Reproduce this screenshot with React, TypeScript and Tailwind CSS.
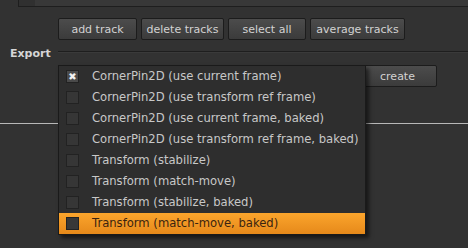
const items = [
  "CornerPin2D (use current frame)",
  "CornerPin2D (use transform ref frame)",
  "CornerPin2D (use current frame, baked)",
  "CornerPin2D (use transform ref frame, baked)",
  "Transform (stabilize)",
  "Transform (match-move)",
  "Transform (stabilize, baked)",
  "Transform (match-move, baked)",
];

const buttons = [
  { label: "add track", w: "w-[79px]" },
  { label: "delete tracks", w: "w-[83px]" },
  { label: "select all", w: "w-[78px]" },
  { label: "average tracks", w: "w-[95px]" },
];

function NukeButton({ label, className = "" }: { label: string; className?: string }) {
  return (
    <button
      className={`h-[22px] rounded-[2px] border border-[#1c1c1c] bg-gradient-to-b from-[#4c4c4c] to-[#3b3b3b] text-[11px] text-[#d2d2d2] leading-none ${className}`}
    >
      {label}
    </button>
  );
}

export default function App() {
  const selected = 0;
  const hovered = 7;

  return (
    <div
      className="relative w-[468px] h-[248px] overflow-hidden bg-[#323232] text-[#cfcfcf]"
      style={{ fontFamily: '"DejaVu Sans", Verdana, sans-serif' }}
    >
      {/* curve panel above, cut off */}
      <div className="ml-[18px] flex h-[7px] border-l border-b border-[#1e1e1e]">
        <div className="w-[16px] bg-[#303030]" />
        <div className="flex-1 bg-[#383838]" />
      </div>

      <div className="mt-[11px] flex gap-[4px] pl-[58px]">
        {buttons.map((b) => (
          <NukeButton key={b.label} label={b.label} className={b.w} />
        ))}
      </div>

      {/* Export knob group */}
      <div className="mt-[6px] flex items-center h-[14px]">
        <span className="pl-[10px] w-[58px] text-[11px] font-bold leading-none text-[#d6d6d6]">Export</span>
        <div className="mb-[2px] flex-1 border-t border-[#1e1e1e] border-b-[#3a3a3a] border-b h-[2px]" />
      </div>

      <div className="mt-[5px] flex pl-[58px] h-[22px]">
        <div className="w-[296px] h-[22px] border border-[#1c1c1c] bg-[#2e2e2e]" />
        <NukeButton label="create" className="ml-[4px] w-[79px]" />
      </div>

      <div className="mt-[36px] h-px bg-[#b8b8b8]" />

      {/* dropdown popup */}
      <div className="absolute left-[58px] top-[65px] w-[308px] border border-[#1a1a1a] bg-[#2e2e2e] shadow-[3px_3px_4px_rgba(0,0,0,0.55)]">
        {items.map((text, i) => {
          const hot = i === hovered;
          return (
            <div
              key={text}
              className={`flex h-[21px] items-center text-[11.6px] ${
                hot
                  ? "bg-gradient-to-b from-[#fba52c] to-[#e6891a] text-[#3a2410]"
                  : "text-[#c8c8c8]"
              }`}
            >
              <div
                className={`ml-[7px] flex h-[13px] w-[13px] items-center justify-center border border-[#222] ${
                  i === selected ? "bg-[#4a4a4a]" : hot ? "bg-[#383838]" : "bg-[#363636]"
                }`}
              >
                {i === selected && (
                  <span className="text-[10px] leading-none text-[#f0f0f0]">✖</span>
                )}
              </div>
              <span className="ml-[13px] whitespace-nowrap">{text}</span>
            </div>
          );
        })}
      </div>
    </div>
  );
}
